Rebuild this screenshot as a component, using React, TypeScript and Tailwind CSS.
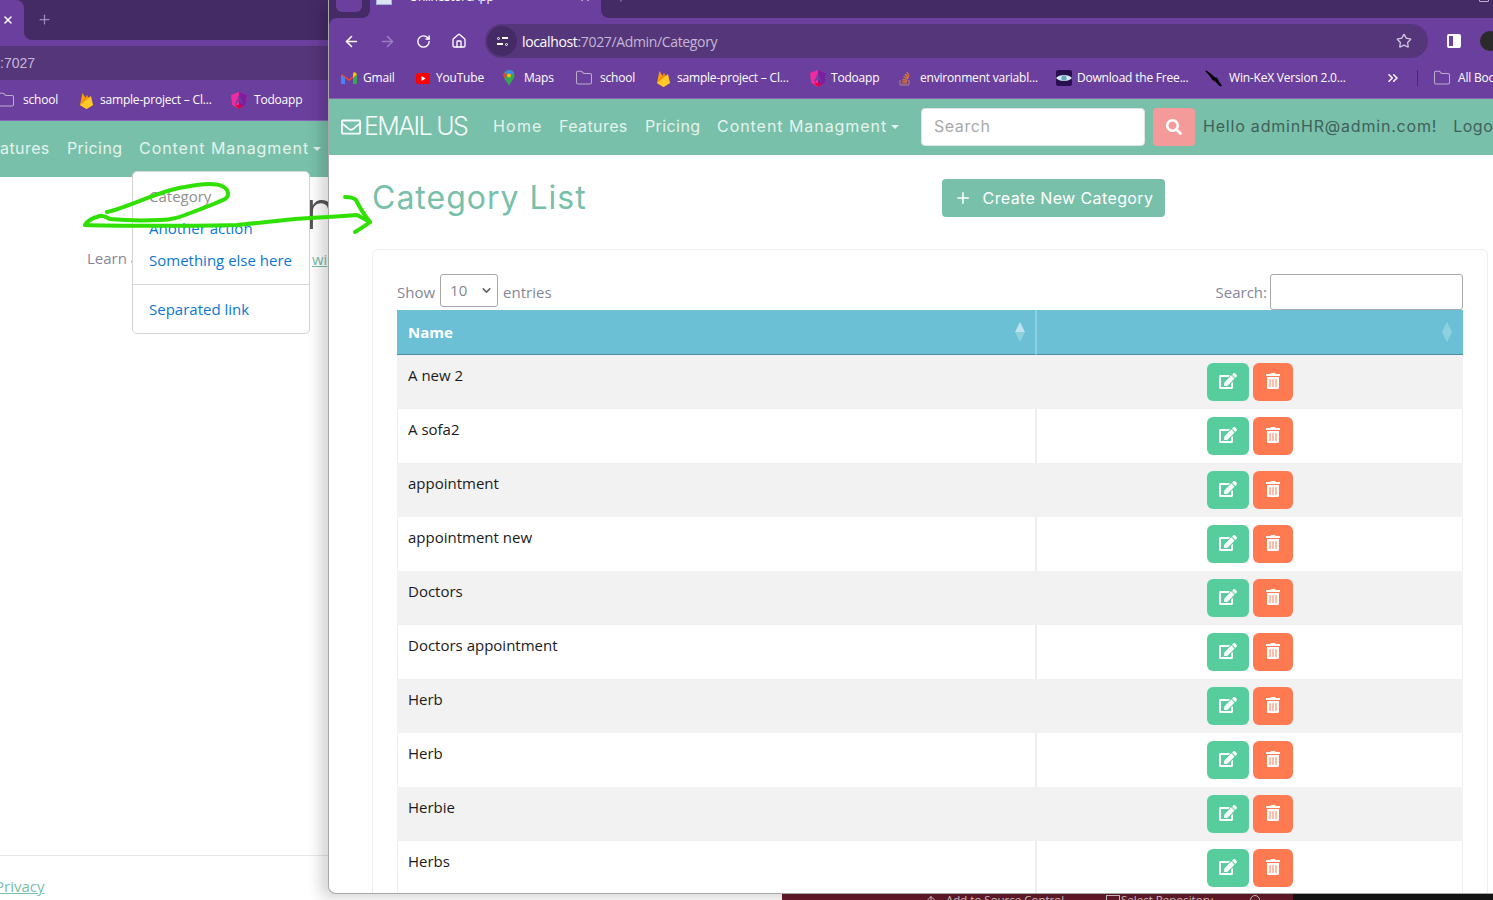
import { ArrowLeft, ArrowRight, RotateCw, Home, Star, ChevronsRight, Folder, Plus, X, ChevronDown, ArrowUp } from "lucide-react";
import { FaEdit, FaRegEnvelope, FaSearch, FaTrashAlt } from "react-icons/fa";

const rows = ["A new 2", "A sofa2", "appointment", "appointment new", "Doctors", "Doctors appointment", "Herb", "Herb", "Herbie", "Herbs"];

const Gmail = () => (
  <svg width="16" height="12" viewBox="0 0 16 12">
    <path d="M1 12V2l7 5 7-5v10h-3V6L8 9 4 6v6z" fill="#ea4335" />
    <path d="M0 2.500V11a1 1 0 0 0 1 1h3V6z" fill="#4285f4" />
    <path d="M16 2.500V11a1 1 0 0 1-1 1h-3V6z" fill="#34a853" />
    <path d="M12 6V1l2-1 2 2.500z" fill="#fbbc04" />
  </svg>
);
const YouTube = () => (
  <svg width="14" height="11" viewBox="0 0 14 11">
    <rect width="14" height="11" rx="2.500" fill="#f00" />
    <path d="M5.500 3v5l4-2.500z" fill="#fff" />
  </svg>
);
const Maps = () => (
  <svg width="12" height="16" viewBox="0 0 12 16">
    <path d="M6 0C2.700 0 .5 2.400.5 5.400c0 3.800 4 6 5.500 10.600 1.500-4.600 5.500-6.800 5.500-10.600C11.500 2.400 9.300 0 6 0z" fill="#34a853" />
    <path d="M1.500 2.500 6 0c2 0 4 1 5 2.800L8 5z" fill="#4285f4" />
    <path d="M.5 5.400c0-1 .4-2.100 1-2.900L4 5 1.800 8.300C1 7.400.5 6.500.5 5.400z" fill="#ea4335" />
    <circle cx="6" cy="5.500" r="2" fill="#fbbc04" />
  </svg>
);
const Flame = () => (
  <svg width="13" height="17" viewBox="0 0 13 17" className="ml-[4px] shrink-0">
    <path d="M0 13 2.500 1l3 5L7 3l6 10-6.500 4z" fill="#ffa000" />
    <path d="M0 13 7 3l2 3.500L6.500 17z" fill="#f57c00" opacity=".6" />
    <path d="m0 13 6.500 4 6.500-4-2-9z" fill="#ffca28" />
  </svg>
);
const Angular = () => (
  <svg width="16" height="17" viewBox="0 0 16 17">
    <path d="M8 0 0 3l1.300 10L8 17l6.700-4L16 3z" fill="#f02c9c" />
    <path d="M8 0v17l6.700-4L16 3z" fill="#7b1fa2" />
    <path d="M8 3 4 12h1.500l.8-2h3.400l.8 2H12zm-1.100 5.500L8 6l1.100 2.500z" fill="#6b3f9e" />
    <path d="M4 13h8l-4 4z" fill="#e4003a" />
  </svg>
);
const Stack = () => (
  <svg width="12" height="15" viewBox="0 0 12 15">
    <path d="M1 9v5h9V9" fill="none" stroke="#a88" strokeWidth="1" />
    <path d="M3 12h5M3 10l5 .5M3.500 8l5 1.500M4.500 5.500 9 8M6 3l3.500 4M8 1l2 4.500" fill="none" stroke="#e87922" strokeWidth="1.200" />
  </svg>
);
const Eye = () => (
  <svg width="16" height="16" viewBox="0 0 16 16">
    <rect width="16" height="16" rx="2" fill="#2a0f4e" />
    <path d="M0 8c3-4 13-4 16 0-3 4-13 4-16 0z" fill="#d4e6ee" />
    <circle cx="8" cy="8" r="2.600" fill="#6aa6bd" />
  </svg>
);
const Kali = () => (
  <svg width="18" height="17" viewBox="0 0 18 17">
    <path d="M0 0c3 0 4 2 7 4l3 3 3 1 2 4 3 4-2 1-3-3-2-2-3-2-3-4C3 3 1 2 0 0z" fill="#050505" />
  </svg>
);

const Bookmark = ({ icon, label, className }: { icon: React.ReactNode; label: string; className?: string }) => (
  <div className={"flex items-center shrink-0 " + (className ?? "gap-[7px]")}>
    <span className="flex w-[17px] justify-center shrink-0">{icon}</span>
    <span className="whitespace-nowrap">{label}</span>
  </div>
);

const FolderIcon = () => <Folder size={18} strokeWidth={1.4} className="text-[#b9aecb] shrink-0" />;

const Caret = () => <span className="ml-[4px] mt-[1px] border-x-[4px] border-t-[4px] border-x-transparent border-t-[#e4f3ed]" />;

function Navbar({ front }: { front: boolean }) {
  return (
    <nav className="font-['Inter',sans-serif] text-[#e4f3ed] text-[16px] tracking-[0.55px] h-[56px] bg-[#78c0aa] flex items-center shrink-0 whitespace-nowrap">
      {front ? (
        <>
          <div className="flex items-center ml-[12px] w-[152px] shrink-0 gap-[3px] text-[#f4fbf8]">
            <FaRegEnvelope size={20} />
            <span className="text-[25px] font-light tracking-[-1.6px]">EMAIL US</span>
          </div>
          <span className="w-[66px] shrink-0 pb-[2px] tracking-[1.2px]">Home</span>
          <span className="w-[86px] shrink-0 pb-[2px] tracking-[0.4px]">Features</span>
          <span className="w-[72px] shrink-0 pb-[2px] tracking-[0.4px]">Pricing</span>
          <span className="flex items-center w-[204px] shrink-0 pb-[2px] tracking-[0.95px]">
            Content Managment
            <Caret />
          </span>
          <div className="w-[224px] shrink-0 h-[38px] rounded-[4px] bg-white border border-[#dfe5e2] px-[12px] pb-[2px] flex items-center text-[#a9a9a9]">Search</div>
          <div className="ml-[8px] w-[42px] shrink-0 h-[38px] rounded-[4px] bg-[#f49a9a] flex items-center justify-center text-white">
            <FaSearch size={16} />
          </div>
          <span className="ml-[8px] shrink-0 pb-[2px] text-[#3f6159] tracking-[0.8px]">Hello adminHR@admin.com!</span>
          <span className="ml-[16px] shrink-0 pb-[2px] text-[#3f6159]">Logout</span>
        </>
      ) : (
        <>
          <span className="ml-[-19px] w-[86px] shrink-0 pb-[2px] tracking-[0.4px]">Features</span>
          <span className="w-[72px] shrink-0 pb-[2px] tracking-[0.4px]">Pricing</span>
          <span className="flex items-center shrink-0 pb-[2px] tracking-[0.95px]">
            Content Managment
            <Caret />
          </span>
        </>
      )}
    </nav>
  );
}

function BackWindow() {
  return (
    <div className="absolute left-0 top-0 w-[340px] h-[900px] bg-white flex flex-col overflow-hidden">
      <div className="h-[40px] bg-[linear-gradient(#452b66_50%,#6b3f9e_50%)] flex items-start shrink-0">
        <div className="w-[24px] h-[40px] bg-[#6b3f9e] rounded-tr-[8px] flex items-center justify-center text-white">
          <X size={12} strokeWidth={3} className="-ml-[8px]" />
        </div>
        <div className="flex-1 h-[40px] bg-[#452b66] rounded-bl-[8px]">
          <Plus size={15} strokeWidth={2} className="ml-[13px] mt-[12px] text-[#9d8bb8]" />
        </div>
      </div>
      <div className="h-[40px] bg-[#6b3f9e] pt-[6px] shrink-0">
        <div className="h-[34px] bg-[#55367a] flex items-center text-[14px] text-[#c4b8d6] font-['Liberation_Sans',sans-serif]">:7027</div>
      </div>
      <div className="h-[41px] bg-[#6b3f9e] border-b border-[#8a63b5] flex items-center text-[12px] text-white font-['Open_Sans',sans-serif] tracking-[-0.2px] shrink-0 whitespace-nowrap">
        <div className="-ml-[3px] flex items-center gap-[8px] w-[79px] shrink-0"><FolderIcon /><span>school</span></div>
        <Bookmark icon={<Flame />} label="sample-project – Cl..." className="w-[154px] gap-[7px]" />
        <Bookmark icon={<Angular />} label="Todoapp" />
      </div>
      <Navbar front={false} />
      <div className="flex-1 relative font-['Open_Sans',sans-serif] text-[15px] text-[#858796]">
        <div className="absolute left-[87px] top-[70px] h-[22px] flex items-center">Learn a</div>
        <div className="absolute left-[312px] top-[71px] text-[#78c0aa] underline">wi</div>
        <div className="absolute left-[305px] top-[3px] font-['Inter',sans-serif] font-light text-[53px] leading-[60px] text-[#555]">n</div>
        <div className="absolute left-0 right-0 top-[678px] border-t border-[#e8e8e8]" />
        <div className="absolute -left-[5px] top-[698px] text-[#78c0aa] underline">Privacy</div>
      </div>
    </div>
  );
}

function DropdownMenu() {
  return (
    <div className="absolute left-[132px] top-[171px] w-[178px] h-[163px] bg-white border border-[#d5d5d5] rounded-[5px] py-[8px] font-['Open_Sans',sans-serif] text-[15px] text-[#0a77d5] z-10">
      <div className="h-[32px] px-[16px] flex items-center text-[#8f8f8f]">Category</div>
      <div className="h-[32px] px-[16px] flex items-center">Another action</div>
      <div className="h-[32px] px-[16px] flex items-center whitespace-nowrap">Something else here</div>
      <div className="my-[8px] border-t border-[#d9d9d9]" />
      <div className="h-[32px] px-[16px] flex items-center">Separated link</div>
    </div>
  );
}

function SortArrows({ up }: { up?: boolean }) {
  return (
    <span className="flex flex-col items-center">
      <span className={"border-x-[5.500px] border-b-[10px] border-x-transparent " + (up ? "border-b-[#bfe3ec]" : "border-b-[#8fd0df]")} />
      <span className="border-x-[5.500px] border-t-[10px] border-x-transparent border-t-[#8fd0df]" />
    </span>
  );
}

function FrontWindow() {
  return (
    <div className="absolute left-[328px] top-0 w-[1165px] h-[894px] bg-white rounded-bl-[8px] border-l border-b border-[#a8a8a8] shadow-[-8px_4px_14px_rgba(0,0,0,0.16)] flex flex-col overflow-hidden z-20">
      <div className="bg-[#452b66] shrink-0">
        <div className="h-[18px] bg-[#6b3f9e] flex items-start">
          <div className="relative w-[41px] h-[18px] bg-[#452b66] rounded-br-[8px] shrink-0">
            <div className="absolute left-[7px] top-0 w-[26px] h-[12px] bg-[#6b3f9e] rounded-b-[6px]" />
          </div>
          <div className="relative w-[231px] h-[18px] overflow-hidden font-['Open_Sans',sans-serif] text-[12px] tracking-[-0.3px] leading-[18px] text-white shrink-0">
            <div className="absolute left-[6px] -top-[7px] w-[16px] h-[12px] bg-[#dbe5f2] border border-[#9db6d6]" />
            <span className="absolute left-[39px] -top-[12px]">OnlineStoreApp</span>
            <X size={12} strokeWidth={3} className="absolute right-[10px] -top-[9px]" />
          </div>
          <div className="relative flex-1 h-[18px] bg-[#452b66] rounded-bl-[8px]">
            <Plus size={14} strokeWidth={2} className="absolute left-[13px] -top-[10px] text-[#9d8bb8]" />
            <div className="absolute right-[4px] -top-[8px] w-[10px] h-[10px] border border-[#b9aecb] rounded-[1px]" />
          </div>
        </div>
        <div className="h-[40px] bg-[#6b3f9e] rounded-tl-[8px] flex items-start pt-[6px]">
          <div className="flex items-center h-[34px] text-white shrink-0">
            <ArrowLeft size={17} strokeWidth={2.2} className="ml-[14px]" />
            <ArrowRight size={17} strokeWidth={2.2} className="ml-[19px] text-[#9a7fc0]" />
            <RotateCw size={15} strokeWidth={2.2} className="ml-[20px]" />
            <Home size={16} strokeWidth={2} className="ml-[20px]" />
          </div>
          <div className="ml-[18px] w-[943px] shrink-0 h-[34px] bg-[#55367a] rounded-full flex items-center font-['Open_Sans',sans-serif] text-[14px] tracking-[-0.35px] text-[#c4b8d6]">
            <div className="ml-[2px] w-[30px] h-[30px] rounded-full bg-[#452b66] flex flex-col items-center justify-center gap-[3px]">
              <span className="flex items-center gap-[2px]"><span className="w-[3px] h-[3px] rounded-full border border-white" /><span className="w-[6px] h-[2px] bg-white" /></span>
              <span className="flex items-center gap-[2px]"><span className="w-[6px] h-[2px] bg-white" /><span className="w-[3px] h-[3px] rounded-full border border-white" /></span>
            </div>
            <span className="ml-[5px] text-white">localhost</span>
            <span>:7027/Admin/Category</span>
            <Star size={16} strokeWidth={2} className="ml-auto mr-[16px] text-[#cfc6dc]" />
          </div>
          <div className="ml-[19px] mt-[10px] w-[14px] h-[14px] shrink-0 rounded-[2px] border-2 border-white flex justify-end"><span className="w-[6px] bg-white" /></div>
          <div className="ml-[19px] mt-[7px] w-[20px] h-[20px] rounded-full bg-[#2b2b2b] shrink-0" />
        </div>
      </div>
      <div className="h-[41px] bg-[#6b3f9e] border-b border-[#8a63b5] flex items-center text-[12px] text-white font-['Open_Sans',sans-serif] tracking-[-0.2px] shrink-0 whitespace-nowrap pl-[11px]">
        <Bookmark icon={<Gmail />} label="Gmail" className="w-[74px] gap-[6px]" />
        <Bookmark icon={<YouTube />} label="YouTube" className="w-[86px] gap-[5px]" />
        <Bookmark icon={<Maps />} label="Maps" className="w-[75px] gap-[7px]" />
        <div className="flex items-center gap-[7px] w-[78px] shrink-0"><FolderIcon /><span>school</span></div>
        <Bookmark icon={<Flame />} label="sample-project – Cl..." className="w-[156px] gap-[7px]" />
        <Bookmark icon={<Angular />} label="Todoapp" className="w-[87px] gap-[5px]" />
        <Bookmark icon={<Stack />} label="environment variabl..." className="w-[159px] gap-[7px]" />
        <Bookmark icon={<Eye />} label="Download the Free..." className="w-[150px] gap-[5px]" />
        <Bookmark icon={<Kali />} label="Win-KeX Version 2.0..." className="w-[180px] gap-[7px]" />
        <ChevronsRight size={16} strokeWidth={2.2} className="shrink-0" />
        <div className="ml-[16px] w-[1px] h-[16px] bg-[#452b66] shrink-0" />
        <div className="ml-[15px] flex items-center gap-[7px] shrink-0"><FolderIcon /><span>All Bookmarks</span></div>
      </div>
      <Navbar front={true} />
      <div className="flex-1 font-['Open_Sans',sans-serif] text-[15px] text-[#858796] pl-[43px] pr-[5px] overflow-hidden">
        <div className="h-[94px] flex items-start pt-[24px]">
          <h1 className="w-[570px] shrink-0 font-['Inter',sans-serif] text-[32px] leading-[38px] text-[#78c0aa] tracking-[1px]">Category List</h1>
          <button className="h-[38px] w-[223px] shrink-0 rounded-[4px] bg-[#78c0aa] text-white text-[16px] font-['Inter',sans-serif] flex items-center justify-center gap-[11px] tracking-[0.4px] whitespace-nowrap">
            <Plus size={18} strokeWidth={2} />
            Create New Category
          </button>
        </div>
        <div className="border border-[#eeeeee] rounded-[6px] h-[700px] px-[24px] pt-[24px]">
          <div className="h-[36px] flex items-start justify-between">
            <div className="flex items-start gap-[5px] h-[33px] leading-[36px]">
              Show
              <div className="w-[58px] h-[33px] leading-[31px] border border-[#a8a8a8] rounded-[3px] flex items-center justify-between pl-[9px] pr-[4px] text-[#858796]">
                10 <ChevronDown size={13} strokeWidth={3} className="text-[#666]" />
              </div>
              entries
            </div>
            <div className="flex items-center gap-[3px]">
              Search:
              <div className="w-[193px] h-[36px] border border-[#a8a8a8] rounded-[3px]" />
            </div>
          </div>
          <div className="grid grid-cols-[640px_426px] text-[#1a1a1a]">
            <div className="h-[45px] bg-[#6bc0d6] border-b border-[#4f8ea0] border-r-2 border-r-[#8fd0df] text-white font-bold pl-[11px] pr-[10px] flex items-center justify-between">
              <span className="pt-[1px]">Name</span>
              <SortArrows up />
            </div>
            <div className="h-[45px] bg-[#6bc0d6] border-b border-[#4f8ea0] flex items-center justify-end pr-[11px]">
              <SortArrows />
            </div>
            {rows.map((name, i) => (
              <div key={i} className="contents">
                <div className={"h-[54px] pt-[8px] leading-[24px] " + (i % 2 === 0 ? "bg-[#f2f2f2] pl-[11px]" : "pl-[10px] border-l border-r-2 border-[#eeeeee]")}>{name}</div>
                <div className={"h-[54px] flex justify-center items-start pt-[8px] gap-[4px] " + (i % 2 === 0 ? "bg-[#f2f2f2]" : "pl-[1px] border-r border-[#eeeeee]")}>
                  <button className="w-[42px] h-[38px] rounded-[6px] bg-[#57cc9c] text-white flex items-center justify-center pb-[2px]"><FaEdit size={18} /></button>
                  <button className="w-[40px] h-[38px] rounded-[6px] bg-[#ff7a50] text-white flex items-center justify-center pb-[2px]"><FaTrashAlt size={16} /></button>
                </div>
              </div>
            ))}
          </div>
        </div>
      </div>
    </div>
  );
}

function Annotation() {
  return (
    <svg className="absolute left-0 top-0 z-30 pointer-events-none" width="400" height="260" viewBox="0 0 400 260" fill="none" stroke="#2fe000" strokeWidth="4" strokeLinecap="round" strokeLinejoin="round">
      <path d="M107 212C130 207 160 190 185 187C200 184 215 183 222 186C230 190 229 196 225 199C215 204 203 208 193 212C180 217 172 220 160 220C140 221 120 220 110 219C106 217 103 215 100 216C92 218 87 221 85 225C110 226 200 226 237 225C260 223 290 219 310 218C330 217 345 216 357 215L370 222" />
      <path d="M345 197C350 197 354 198 356 200C359 206 365 216 370 222C365 226 360 229 355 232" />
    </svg>
  );
}

export default function App() {
  return (
    <div className="relative w-[1493px] h-[900px] overflow-hidden bg-white">
      <BackWindow />
      <DropdownMenu />
      <div className="absolute left-[782px] top-[894px] w-[511px] h-[6px] bg-[#651a2a] overflow-hidden font-['Open_Sans',sans-serif] text-[11.500px] leading-[14px] text-[#d8c6cb] whitespace-nowrap">
        <ArrowUp size={12} className="absolute left-[143px] top-0" />
        <span className="absolute left-[164px] -top-[1px]">Add to Source Control</span>
        <div className="absolute left-[324px] top-[1px] w-[14px] h-[8px] border border-[#d8c6cb]" />
        <span className="absolute left-[339px] -top-[1px]">Select Repository</span>
        <div className="absolute left-[468px] top-[1px] w-[10px] h-[12px] rounded-full border border-[#d8c6cb]" />
      </div>
      <div className="absolute left-[1293px] top-[894px] w-[200px] h-[6px] bg-[#151515]" />
      <FrontWindow />
      <Annotation />
    </div>
  );
}
